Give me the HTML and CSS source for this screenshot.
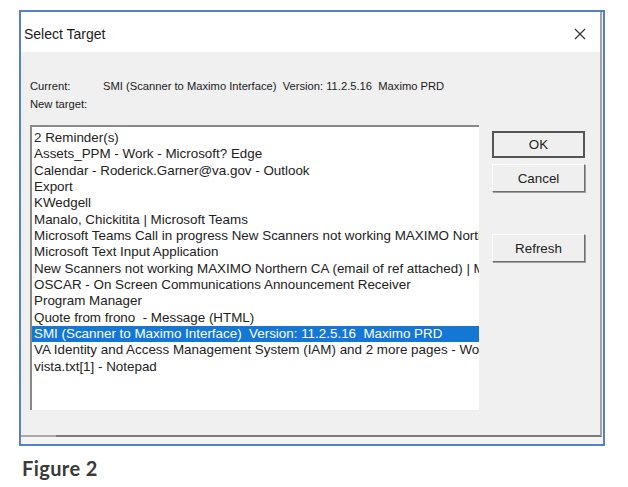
FILE: index.html
```html
<!DOCTYPE html>
<html lang="en">
<head>
    <meta charset="UTF-8">
    <title>Select Target</title>
    <link rel="stylesheet" href="styles.css">
</head>
<body>
    <div class="window">
        <div class="frame">
            <div class="titlebar">
                <span class="title">Select Target</span>
                <svg class="close" width="12" height="12" viewBox="0 0 12 12">
                    <path d="M1 1 L11 11 M11 1 L1 11" stroke="#333" stroke-width="1.2" fill="none"/>
                </svg>
            </div>
            <div class="client">
                <div class="current">
                    <span class="current-label">Current:</span>
                    <span>SMI (Scanner to Maximo Interface)&nbsp; Version: 11.2.5.16&nbsp; Maximo PRD</span>
                </div>
                <div class="new-target">New target:</div>
                <div class="main">
                    <ul class="list">
                        <li>2 Reminder(s)</li>
                        <li>Assets_PPM - Work - Microsoft? Edge</li>
                        <li>Calendar - Roderick.Garner@va.gov - Outlook</li>
                        <li>Export</li>
                        <li>KWedgell</li>
                        <li>Manalo, Chickitita | Microsoft Teams</li>
                        <li>Microsoft Teams Call in progress New Scanners not working MAXIMO Northern CA</li>
                        <li>Microsoft Text Input Application</li>
                        <li>New Scanners not working MAXIMO Northern CA (email of ref attached) | Microsoft Teams</li>
                        <li>OSCAR - On Screen Communications Announcement Receiver</li>
                        <li>Program Manager</li>
                        <li>Quote from frono&nbsp; - Message (HTML)</li>
                        <li class="selected">SMI (Scanner to Maximo Interface)&nbsp; Version: 11.2.5.16&nbsp; Maximo PRD</li>
                        <li>VA Identity and Access Management System (IAM) and 2 more pages - Work - Microsoft Edge</li>
                        <li>vista.txt[1] - Notepad</li>
                    </ul>
                    <div class="buttons">
                        <button class="btn btn-default">OK</button>
                        <button class="btn">Cancel</button>
                        <button class="btn btn-refresh">Refresh</button>
                    </div>
                </div>
            </div>
        </div>
    </div>
    <div class="caption">Figure 2</div>
</body>
</html>
```

FILE: styles.css
```css
body {
    margin: 0;
    background-color: #ffffff;
    font-family: 'Liberation Sans', Arial, sans-serif;
    color: #1a1a1a;
}

.window {
    width: 581px;
    height: 425px;
    margin: 10px 0 0 19px;
    border: 2px solid #5680c4;
    background-color: #f4f4f4;
    padding: 0 1px 7px 0;
    box-sizing: content-box;
}

.frame {
    position: relative;
    height: 100%;
    border-right: 2px solid #a4a4a4;
    border-bottom: 2px solid #7c7c7c;
    box-sizing: border-box;
    display: flex;
    flex-direction: column;
}

/* lighter stretch at the left end of the bottom line */
.frame::after {
    content: '';
    position: absolute;
    left: 0;
    bottom: -2px;
    width: 35px;
    height: 2px;
    background-color: #a8a8a8;
}

.titlebar {
    height: 40px;
    flex: none;
    box-sizing: border-box;
    background-color: #ffffff;
    display: flex;
    align-items: center;
    justify-content: space-between;
    padding: 4px 14px 0 3px;
}

.title {
    font-size: 14px;
    color: #1a1a1a;
}

.close {
    display: block;
}

.client {
    flex: 1;
    background-color: #f0f0f0;
    padding: 25px 0 0 9px;
    font-size: 11.2px;
}

.current {
    display: flex;
    height: 17px;
    align-items: center;
}

.current-label {
    width: 73px;
}

.new-target {
    height: 17px;
    line-height: 17px;
    margin-top: 2px;
}

.main {
    display: flex;
    margin-top: 12px;
}

.list {
    list-style: none;
    margin: 0;
    padding: 3px 0 0 0;
    width: 449px;
    height: 285px;
    box-sizing: border-box;
    background-color: #ffffff;
    border-top: 2px solid #8a8a8a;
    border-left: 2px solid #8a8a8a;
    overflow: hidden;
    font-size: 13.4px;
    color: #222222;
}

.list li {
    height: 16.35px;
    line-height: 16.35px;
    padding-left: 2px;
    white-space: nowrap;
    overflow: hidden;
}

.list li.selected {
    background-color: #1477d4;
    color: #ffffff;
}

.buttons {
    display: flex;
    flex-direction: column;
    margin: 6px 0 0 13px;
    width: 93px;
}

.btn {
    height: 28px;
    margin-bottom: 6px;
    font-family: 'Liberation Sans', Arial, sans-serif;
    font-size: 13.4px;
    color: #222222;
    background-color: #efefef;
    border: 1px solid;
    border-color: #ffffff #6e6e6e #6e6e6e #ffffff;
    box-shadow: 1px 1px 0 #a0a0a0;
    padding: 0;
}

.btn-default {
    height: 27px;
    border: 2px solid #555555;
    box-shadow: none;
}

.btn-refresh {
    margin-top: 36px;
}

.caption {
    margin: 10px 0 0 22px;
    font-family: Lato, 'Open Sans', sans-serif;
    font-weight: bold;
    font-size: 20px;
    letter-spacing: 0.4px;
    color: #3a3a3a;
}
```
